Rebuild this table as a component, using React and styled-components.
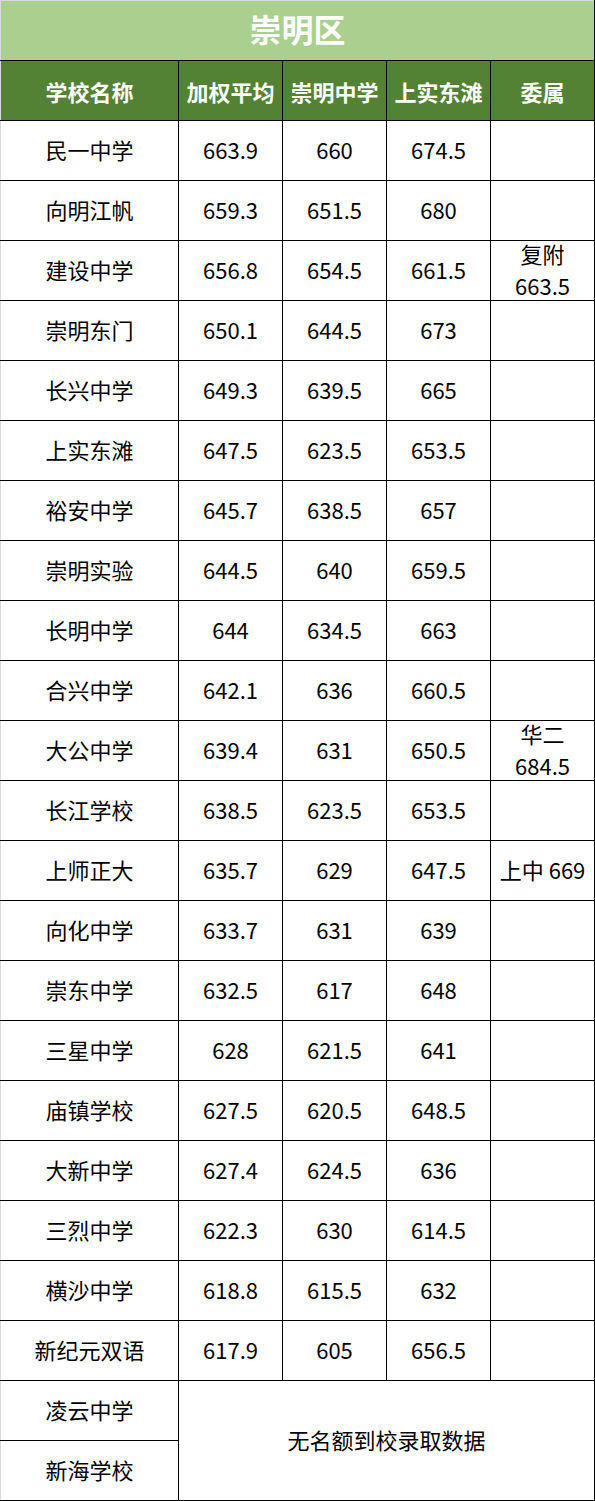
import styled, { createGlobalStyle } from 'styled-components';

const GlobalStyle = createGlobalStyle`
  html, body {
    margin: 0;
    padding: 0;
    background: #fff;
  }
  body {
    font-family: "Noto Sans CJK SC", "Noto Sans", sans-serif;
  }
`;

const Table = styled.table`
  width: 594px;
  border-collapse: collapse;
  table-layout: fixed;
  color: #000;
`;

const TitleCell = styled.th`
  height: 59px;
  padding: 0;
  background: #a9d08e;
  color: #fff;
  font-size: 32px;
  font-weight: 700;
  text-align: center;
  border-top: 1px solid #d9d9d9;
  border-left: 1px solid #d9d9d9;
  border-right: 1px solid #000;
  border-bottom: 1px solid #000;
`;

const HeadCell = styled.th`
  height: 59px;
  padding: 0;
  background: #548235;
  color: #fff;
  font-size: 22px;
  font-weight: 700;
  text-align: center;
  border: 1px solid #000;
  &:first-child {
    border-left: 1px solid #d9d9d9;
  }
`;

const Cell = styled.td`
  height: 59px;
  padding: 0;
  font-size: 22px;
  text-align: center;
  vertical-align: middle;
  border: 1px solid #000;
  &:first-child {
    border-left: 1px solid #d9d9d9;
  }
`;

const Inner = styled.div`
  height: ${(p) => (p.$tall ? 119 : 59)}px;
  display: flex;
  flex-direction: column;
  align-items: center;
  justify-content: center;
  line-height: 32px;
  padding-bottom: ${(p) => (p.$lift ? 5 : 3)}px;
  box-sizing: border-box;
  white-space: nowrap;
`;

const rows = [
  ['民一中学', '663.9', '660', '674.5', ''],
  ['向明江帆', '659.3', '651.5', '680', ''],
  ['建设中学', '656.8', '654.5', '661.5', '复附\n663.5'],
  ['崇明东门', '650.1', '644.5', '673', ''],
  ['长兴中学', '649.3', '639.5', '665', ''],
  ['上实东滩', '647.5', '623.5', '653.5', ''],
  ['裕安中学', '645.7', '638.5', '657', ''],
  ['崇明实验', '644.5', '640', '659.5', ''],
  ['长明中学', '644', '634.5', '663', ''],
  ['合兴中学', '642.1', '636', '660.5', ''],
  ['大公中学', '639.4', '631', '650.5', '华二\n684.5'],
  ['长江学校', '638.5', '623.5', '653.5', ''],
  ['上师正大', '635.7', '629', '647.5', '上中 669'],
  ['向化中学', '633.7', '631', '639', ''],
  ['崇东中学', '632.5', '617', '648', ''],
  ['三星中学', '628', '621.5', '641', ''],
  ['庙镇学校', '627.5', '620.5', '648.5', ''],
  ['大新中学', '627.4', '624.5', '636', ''],
  ['三烈中学', '622.3', '630', '614.5', ''],
  ['横沙中学', '618.8', '615.5', '632', ''],
  ['新纪元双语', '617.9', '605', '656.5', ''],
];

export default function App() {
  return (
    <>
      <GlobalStyle />
      <Table>
        <colgroup>
          <col style={{ width: 178 }} />
          <col style={{ width: 104 }} />
          <col style={{ width: 104 }} />
          <col style={{ width: 104 }} />
          <col style={{ width: 104 }} />
        </colgroup>
        <thead>
          <tr>
            <TitleCell colSpan={5}>
              <Inner $lift>崇明区</Inner>
            </TitleCell>
          </tr>
          <tr>
            <HeadCell>学校名称</HeadCell>
            <HeadCell>加权平均</HeadCell>
            <HeadCell>崇明中学</HeadCell>
            <HeadCell>上实东滩</HeadCell>
            <HeadCell>委属</HeadCell>
          </tr>
        </thead>
        <tbody>
          {rows.map((r) => (
            <tr key={r[0]}>
              {r.map((v, i) => (
                <Cell key={i}>
                  <Inner>
                    {v.split('\n').map((line) => (
                      <span key={line}>{line}</span>
                    ))}
                  </Inner>
                </Cell>
              ))}
            </tr>
          ))}
          <tr>
            <Cell>
              <Inner>凌云中学</Inner>
            </Cell>
            <Cell colSpan={4} rowSpan={2}>
              <Inner $tall>无名额到校录取数据</Inner>
            </Cell>
          </tr>
          <tr>
            <Cell>
              <Inner>新海学校</Inner>
            </Cell>
          </tr>
        </tbody>
      </Table>
    </>
  );
}
